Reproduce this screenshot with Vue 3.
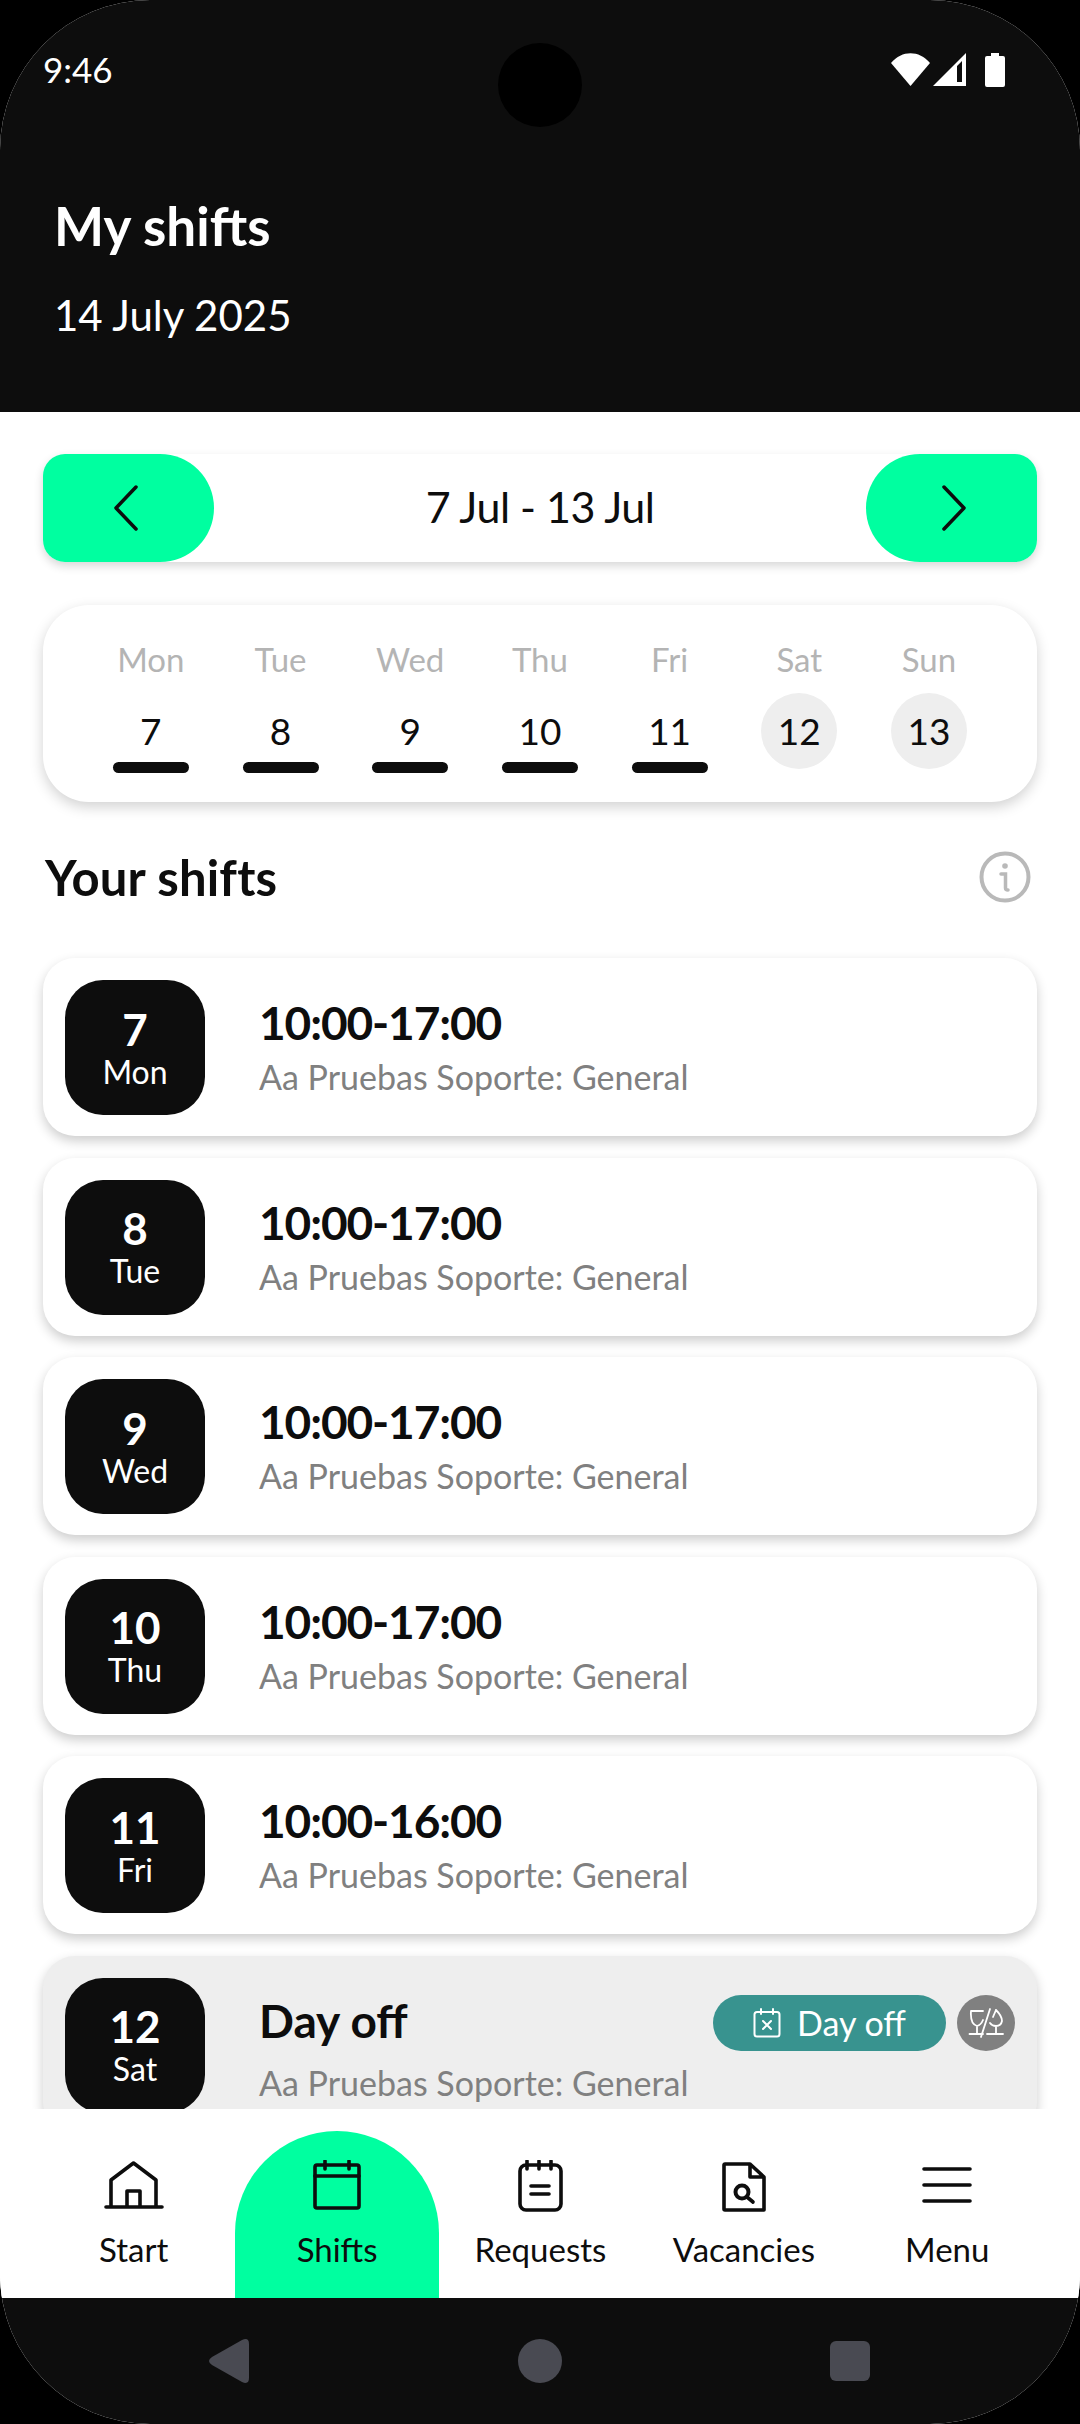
<script setup>
const days = [
  { name: 'Mon', num: 7, work: true },
  { name: 'Tue', num: 8, work: true },
  { name: 'Wed', num: 9, work: true },
  { name: 'Thu', num: 10, work: true },
  { name: 'Fri', num: 11, work: true },
  { name: 'Sat', num: 12, work: false },
  { name: 'Sun', num: 13, work: false },
]

const shifts = [
  { num: 7, name: 'Mon', time: '10:00-17:00' },
  { num: 8, name: 'Tue', time: '10:00-17:00' },
  { num: 9, name: 'Wed', time: '10:00-17:00' },
  { num: 10, name: 'Thu', time: '10:00-17:00' },
  { num: 11, name: 'Fri', time: '10:00-16:00' },
  { num: 12, name: 'Sat', time: 'Day off', off: true },
]
</script>

<template>
  <div class="device">
    <div class="screen">
      <header class="top">
        <div class="status">
          <span class="clock">9:46</span>
          <div class="status-icons">
            <svg width="39" height="34" viewBox="0 0 39 34"><path d="M0 10 C11 -3 28 -3 39 10 L19.500 33 Z" fill="#fff"/></svg>
            <svg width="33" height="34" viewBox="0 0 33 34"><path fill-rule="evenodd" d="M0 33 L33 0 V33 Z M24 13 V29 H29 V8 Z" fill="#fff"/></svg>
            <svg class="battery" width="20" height="34" viewBox="0 0 20 34"><path d="M6 0 H14 V3 H18 Q20 3 20 5 V32 Q20 34 18 34 H2 Q0 34 0 32 V5 Q0 3 2 3 H6 Z" fill="#fff"/></svg>
          </div>
        </div>
        <h1 class="title">My shifts</h1>
        <p class="today">14 July 2025</p>
        <div class="camera"></div>
      </header>

      <main class="content">
        <div class="week-nav">
          <button class="arrow arrow-left">
            <svg width="26" height="46" viewBox="0 0 26 46"><path d="M23 2 L3 23 L23 44" fill="none" stroke="#0d0d0d" stroke-width="3.500" stroke-linecap="round" stroke-linejoin="round"/></svg>
          </button>
          <span class="range">7 Jul - 13 Jul</span>
          <button class="arrow arrow-right">
            <svg width="26" height="46" viewBox="0 0 26 46"><path d="M3 2 L23 23 L3 44" fill="none" stroke="#0d0d0d" stroke-width="3.500" stroke-linecap="round" stroke-linejoin="round"/></svg>
          </button>
        </div>

        <div class="calendar">
          <div v-for="d in days" :key="d.num" class="cal-col">
            <span class="cal-name">{{ d.name }}</span>
            <span class="cal-num" :class="{ rest: !d.work }">{{ d.num }}</span>
            <span v-if="d.work" class="cal-bar"></span>
          </div>
        </div>

        <div class="section-head">
          <h2>Your shifts</h2>
          <svg width="52" height="52" viewBox="0 0 52 52">
            <circle cx="26" cy="26" r="23.500" fill="none" stroke="#b9b9b9" stroke-width="4"/>
            <circle cx="26" cy="15" r="2.800" fill="#b9b9b9"/>
            <path d="M22 23 H26.500 V37 Q26.500 39 29 39" fill="none" stroke="#b9b9b9" stroke-width="3.500" stroke-linecap="round"/>
          </svg>
        </div>

        <div class="shift-list">
          <div v-for="s in shifts" :key="s.num" class="shift" :class="{ off: s.off }">
            <div class="date-box">
              <span class="date-num">{{ s.num }}</span>
              <span class="date-name">{{ s.name }}</span>
            </div>
            <div class="shift-info">
              <div class="shift-time">{{ s.time }}</div>
              <div class="shift-place">Aa Pruebas Soporte: General</div>
            </div>
            <div v-if="s.off" class="tags">
              <span class="tag">
                <svg width="28" height="30" viewBox="0 0 28 30" fill="none" stroke="#fff" stroke-width="2" stroke-linecap="round">
                  <rect x="1.500" y="4" width="25" height="24.500" rx="2.500"/>
                  <path d="M8 1 V6 M20 1 V6 M10 13 L18 21 M18 13 L10 21"/>
                </svg>
                Day off
              </span>
              <span class="tag-round">
                <svg width="36" height="30" viewBox="0 0 36 30" fill="none" stroke="#fff" stroke-width="1.800" stroke-linecap="round" stroke-linejoin="round">
                  <path d="M3 3 H15 M3 3 Q2 16 9 18 Q13 17 15 12 M9 18 V26 M1.500 26 H15"/>
                  <path d="M28 2 Q34 8 34 13 Q33 18 28 18 Q24 18 22 15 M28 2 L25 9 M28 18 V26 M19 26 H35"/>
                  <path d="M22 1 L13 29"/>
                </svg>
              </span>
            </div>
          </div>
        </div>
      </main>

      <nav class="tabs">
        <div class="tab">
          <svg width="60" height="52" viewBox="0 0 60 52" fill="none" stroke="#0d0d0d" stroke-width="3.600" stroke-linecap="round" stroke-linejoin="round">
            <path d="M7 47 V20 L29.500 3 L52 20 V47 M2 47 H58 M23 47 V31 H36 V47"/>
          </svg>
          <span>Start</span>
        </div>
        <div class="tab active">
          <svg width="60" height="52" viewBox="0 0 60 52" fill="none" stroke="#0d0d0d" stroke-width="3.600" stroke-linecap="round" stroke-linejoin="round">
            <rect x="8" y="5" width="44" height="43" rx="2"/>
            <path d="M8 16 H52 M18 1 V9 M42 1 V9"/>
          </svg>
          <span>Shifts</span>
        </div>
        <div class="tab">
          <svg width="60" height="52" viewBox="0 0 60 52" fill="none" stroke="#0d0d0d" stroke-width="3.600" stroke-linecap="round" stroke-linejoin="round">
            <rect x="10" y="5" width="41" height="45" rx="6"/>
            <path d="M17 1 V9 M29 1 V9 M41 1 V9 M21 26 H39 M21 34 H39"/>
          </svg>
          <span>Requests</span>
        </div>
        <div class="tab">
          <svg width="60" height="52" viewBox="0 0 60 52" fill="none" stroke="#0d0d0d" stroke-width="3.600" stroke-linecap="round" stroke-linejoin="round">
            <path d="M11 4 H36 L50 17 V50 H11 Q10 50 10 49 V5 Q10 4 11 4 Z M36 4 V17 H50"/>
            <circle cx="28" cy="32" r="6.500" stroke-width="4"/>
            <path d="M33 37 L39 42" stroke-width="3.600"/>
          </svg>
          <span>Vacancies</span>
        </div>
        <div class="tab">
          <svg width="60" height="52" viewBox="0 0 60 52" fill="none" stroke="#0d0d0d" stroke-width="3.600" stroke-linecap="round">
            <path d="M7 9 H53 M7 25 H53 M7 41 H53"/>
          </svg>
          <span>Menu</span>
        </div>
      </nav>

      <div class="sysbar">
        <svg width="42" height="46" viewBox="0 0 42 46"><path d="M4 19 L34 2 Q41 -1 41 6 V40 Q41 47 34 44 L4 27 Q-2 23 4 19 Z" fill="#494a52"/></svg>
        <span class="sys-circle"></span>
        <span class="sys-square"></span>
      </div>
    </div>
  </div>
</template>

<style scoped>
.device {
  width: 1080px;
  height: 2424px;
  background: #000;
  font-family: "Lato", "Noto Sans", sans-serif;
  color: #0d0d0d;
}

.screen {
  position: relative;
  width: 100%;
  height: 100%;
  display: flex;
  flex-direction: column;
  background: #fff;
  border-radius: 150px;
  overflow: hidden;
}

.top {
  position: relative;
  flex: none;
  height: 412px;
  box-sizing: border-box;
  background: #0d0d0d;
  color: #fff;
  padding: 47px 0 0 54px;
}

.status {
  display: flex;
  justify-content: space-between;
  align-items: center;
  height: 44px;
  margin-left: -11px;
  padding-right: 75px;
}

.clock {
  font-size: 35px;
}

.status-icons {
  display: flex;
  align-items: center;
  gap: 3px;
  margin-top: 2px;
}

.battery {
  margin-left: 16px;
}

.camera {
  position: absolute;
  left: 498px;
  top: 43px;
  width: 84px;
  height: 84px;
  border-radius: 50%;
  background: #000;
}

.title {
  margin: 100px 0 0;
  font-size: 53px;
  line-height: 70px;
  font-weight: 700;
}

.today {
  margin: 28px 0 0;
  font-size: 42px;
  line-height: 52px;
}

.content {
  flex: 1;
  min-height: 0;
  overflow: hidden;
  padding: 42px 43px 0;
}

.week-nav {
  display: flex;
  justify-content: space-between;
  align-items: center;
  height: 108px;
  border-radius: 22px;
  background: #fff;
  box-shadow: 0 4px 10px rgba(0, 0, 0, 0.16);
}

.arrow {
  display: flex;
  align-items: center;
  justify-content: center;
  width: 171px;
  height: 108px;
  padding: 0;
  border: none;
  background: #00ffa0;
}

.arrow-left {
  border-radius: 22px 54px 54px 22px;
  padding-right: 5px;
}

.arrow-right {
  border-radius: 54px 22px 22px 54px;
  padding-left: 5px;
}

.range {
  padding-bottom: 3px;
  font-size: 43px;
  letter-spacing: -0.500px;
}

.calendar {
  display: grid;
  grid-template-columns: repeat(7, 129.700px);
  height: 197px;
  box-sizing: border-box;
  margin-top: 43px;
  padding: 36px 0 0 43px;
  border-radius: 46px;
  background: #fff;
  box-shadow: 0 5px 14px rgba(0, 0, 0, 0.18);
}

.cal-col {
  display: flex;
  flex-direction: column;
  align-items: center;
}

.cal-name {
  height: 36px;
  line-height: 36px;
  font-size: 33px;
  color: #b4b4b4;
}

.cal-num {
  display: flex;
  align-items: center;
  justify-content: center;
  width: 76px;
  height: 76px;
  box-sizing: border-box;
  margin-top: 16px;
  padding-bottom: 2px;
  border-radius: 50%;
  font-size: 37px;
}

.cal-num.rest {
  background: #eee;
}

.cal-bar {
  width: 76px;
  height: 11px;
  margin-top: -7px;
  border-radius: 6px;
  background: #0d0d0d;
}

.section-head {
  display: flex;
  justify-content: space-between;
  align-items: center;
  height: 60px;
  margin-top: 45px;
  padding-left: 2px;
  padding-right: 6px;
}

.section-head h2 {
  margin: 0;
  font-size: 49px;
  font-weight: 700;
  letter-spacing: 0.200px;
}

.shift-list {
  display: flex;
  flex-direction: column;
  gap: 21.500px;
  margin-top: 51px;
}

.shift {
  flex: none;
  display: flex;
  align-items: flex-start;
  height: 178px;
  box-sizing: border-box;
  padding: 22px 22px 0;
  border-radius: 32px;
  background: #fff;
  box-shadow: 0 5px 12px rgba(0, 0, 0, 0.2);
}

.shift.off {
  background: #eee;
}

.date-box {
  flex: none;
  display: flex;
  flex-direction: column;
  align-items: center;
  justify-content: center;
  width: 140px;
  height: 135px;
  border-radius: 38px;
  background: #0d0d0d;
  color: #fff;
}

.date-num {
  font-size: 44px;
  line-height: 48px;
  font-weight: 700;
}

.date-name {
  font-size: 32px;
  line-height: 38px;
}

.shift-info {
  flex: 1;
  padding: 16px 0 0 54px;
}

.shift-time {
  font-size: 46px;
  line-height: 54px;
  font-weight: 700;
  letter-spacing: -1.100px;
}

.shift.off .shift-time {
  letter-spacing: 0;
}

.shift-place {
  margin-top: 7px;
  font-size: 34px;
  line-height: 40px;
  color: #808080;
}

.shift.off .shift-place {
  margin-top: 15px;
}

.tags {
  flex: none;
  display: flex;
  align-items: center;
  gap: 11px;
  margin-top: 17px;
}

.tag {
  display: flex;
  align-items: center;
  justify-content: center;
  gap: 16px;
  width: 233px;
  height: 56px;
  border-radius: 28px;
  background: #38938f;
  color: #fff;
  font-size: 34px;
}

.tag-round {
  display: flex;
  align-items: center;
  justify-content: center;
  width: 58px;
  height: 56px;
  border-radius: 50%;
  background: #808080;
}

.tabs {
  position: relative;
  flex: none;
  display: grid;
  grid-template-columns: repeat(5, 203.400px);
  height: 189px;
  box-sizing: border-box;
  padding: 22px 0 0 32px;
  background: #fff;
}

.tab {
  display: flex;
  flex-direction: column;
  align-items: center;
  padding-top: 29px;
  font-size: 33px;
}

.tab span {
  margin-top: 17px;
  line-height: 40px;
}

.tab.active {
  background: #00ffa0;
  border-radius: 102px 102px 0 0;
}

.sysbar {
  flex: none;
  display: flex;
  align-items: center;
  height: 126px;
  padding: 0 0 0 208px;
  background: #0d0d0d;
}

.sys-circle {
  width: 44px;
  height: 44px;
  margin-left: 268px;
  border-radius: 50%;
  background: #494a52;
}

.sys-square {
  width: 40px;
  height: 40px;
  margin-left: 268px;
  border-radius: 6px;
  background: #494a52;
}
</style>

<style>
html, body {
  margin: 0;
  background: #000;
}
</style>
